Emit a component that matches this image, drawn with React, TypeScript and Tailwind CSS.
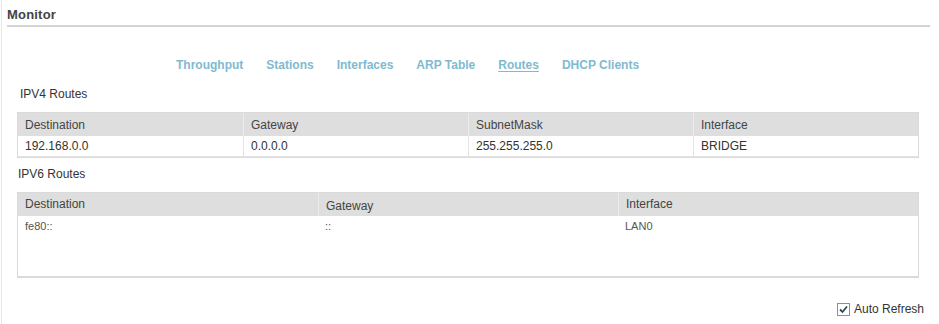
import React from "react";

const font = { fontFamily: '"Liberation Sans", Arial, sans-serif' };

export default function App() {
  const tabs = ["Throughput", "Stations", "Interfaces", "ARP Table", "Routes", "DHCP Clients"];
  return (
    <div className="w-[939px] h-[324px] bg-white relative overflow-hidden" style={font}>
      <div className="absolute left-[1px] top-0 bottom-0 w-px bg-[#e6e6e6]" />
      <div className="pl-[7px] pr-[9px] pt-[7px]">
        <div className="h-[18px] text-[13px] font-bold text-[#444] leading-[16px] tracking-[0.2px]">Monitor</div>
        <div className="h-[2px] bg-[#d4d4d4]" />
      </div>
      <div className="flex gap-[23px] pl-[176px] mt-[30px] h-[16px] items-center">
        {tabs.map((t) => (
          <span
            key={t}
            className={`text-[12px] font-bold text-[#7fbad0] leading-[14px] ${t === "Routes" ? "underline underline-offset-2" : ""}`}
          >
            {t}
          </span>
        ))}
      </div>
      <div className="pl-[20px] mt-[14px] h-[14px] text-[12px] leading-[14px] text-[#333]">IPV4 Routes</div>
      <div className="ml-[17px] mt-[11px] w-[902px] border border-[#dadada] text-[12px] text-[#333]">
        <div className="grid grid-cols-4 h-[23px] bg-[#dedede] items-center">
          {["Destination", "Gateway", "SubnetMask", "Interface"].map((h, i) => (
            <div key={h} className={`h-full flex items-center pl-[7px] text-[#444] ${i > 0 ? "border-l border-[#ececec]" : ""}`}>
              {h}
            </div>
          ))}
        </div>
        <div className="grid grid-cols-4 h-[21px] items-center border-b border-[#e4e4e4]">
          {["192.168.0.0", "0.0.0.0", "255.255.255.0", "BRIDGE"].map((d, i) => (
            <div key={i} className={`h-full flex items-center pl-[7px] ${i > 0 ? "border-l border-[#e4e4e4]" : ""}`}>
              {d}
            </div>
          ))}
        </div>
      </div>
      <div className="pl-[18px] mt-[9px] h-[14px] text-[12px] leading-[14px] text-[#333]">IPV6 Routes</div>
      <div className="ml-[17px] mt-[11px] w-[902px] h-[86px] border border-[#dadada] border-b-2 text-[12px] text-[#444]">
        <div className="grid grid-cols-3 h-[23px] bg-[#dedede]">
          <div className="flex items-center pl-[7px] pb-[2px]">Destination</div>
          <div className="flex items-center pl-[7px] pt-[3px] border-l border-[#ececec]">Gateway</div>
          <div className="flex items-center pl-[7px] pb-[2px] border-l border-[#ececec]">Interface</div>
        </div>
        <div className="grid grid-cols-3 h-[21px] items-center text-[11px] text-[#555]">
          <div className="pl-[7px]">fe80::</div>
          <div className="pl-[7px]">::</div>
          <div className="pl-[7px]">LAN0</div>
        </div>
      </div>
      <div className="absolute right-[15px] top-[302px] flex items-center gap-[4px]">
        <span className="w-[13px] h-[13px] border border-[#8f8f8f] bg-white flex items-center justify-center">
          <svg width="11" height="11" viewBox="0 0 11 11">
            <path d="M2 5.5 L4.5 8 L9 2.5" stroke="#2b4a5a" strokeWidth="1.8" fill="none" />
          </svg>
        </span>
        <span className="text-[12px] text-[#333] leading-[14px]">Auto Refresh</span>
      </div>
    </div>
  );
}
